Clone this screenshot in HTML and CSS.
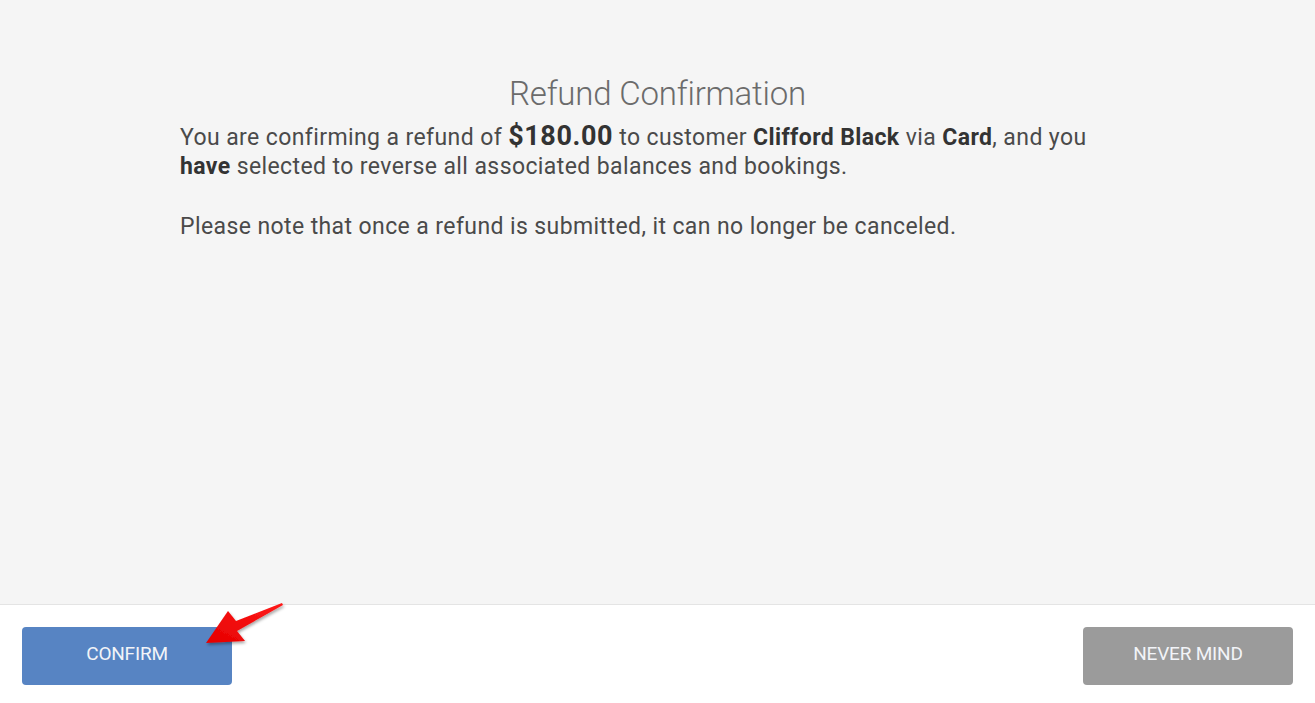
FILE: index.html
```html
<!DOCTYPE html>
<html lang="en">
<head>
<meta charset="utf-8">
<title>Refund Confirmation</title>
<link rel="stylesheet" href="styles.css">
</head>
<body>
<div class="page">
  <main class="content">
    <div class="inner">
      <h1 class="title">Refund Confirmation</h1>
      <p class="msg">You are confirming a refund of <strong class="amount">$180.00</strong> to customer <strong>Clifford Black</strong> via <strong>Card</strong>, and you <strong>have</strong> selected to reverse all associated balances and bookings.</p>
      <p class="msg note">Please note that once a refund is submitted, it can no longer be canceled.</p>
    </div>
  </main>
  <footer class="footer">
    <button class="btn btn-confirm" type="button">CONFIRM</button>
    <button class="btn btn-cancel" type="button">NEVER MIND</button>
    <svg class="arrow" width="100" height="60" viewBox="195 598 100 60" aria-hidden="true">
      <defs>
        <filter id="sh" x="-20%" y="-20%" width="140%" height="140%">
          <feDropShadow dx="1" dy="2" stdDeviation="1.5" flood-color="#000" flood-opacity="0.35"/>
        </filter>
        <linearGradient id="rg" x1="0" y1="1" x2="1" y2="0">
          <stop offset="0" stop-color="#e60000"/>
          <stop offset="1" stop-color="#ff1a1a"/>
        </linearGradient>
      </defs>
      <polygon filter="url(#sh)" fill="url(#rg)" points="282,603 236,621 228,611 206,643 245,641 237,631 283,605"/>
    </svg>
  </footer>
</div>
</body>
</html>
```

FILE: styles.css
```css
* { box-sizing: border-box; }
html, body { margin: 0; padding: 0; height: 100%; }
body {
  font-family: Roboto, "Liberation Sans", Arial, sans-serif;
  background: #f5f5f5;
}
.page {
  width: 1315px;
  height: 703px;
  display: flex;
  flex-direction: column;
}
.content {
  flex: 1;
  background: #f5f5f5;
}
.inner {
  width: 955px;
  margin: 0 auto;
  padding-top: 73px;
}
.title {
  margin: 0 0 7px 0;
  text-align: center;
  font-weight: 300;
  font-size: 33px;
  line-height: 42px;
  color: #6b6b6b;
  letter-spacing: -0.2px;
}
.msg {
  margin: 0;
  font-size: 23px;
  line-height: 29px;
  color: #4a4a4a;
  letter-spacing: 0.4px;
}
.msg strong { color: #333; font-weight: 700; }
.msg .amount { font-size: 27px; letter-spacing: 0.6px; }
.note { margin-top: 31px; }
.footer {
  position: relative;
  height: 99px;
  background: #fff;
  border-top: 1px solid #e4e4e4;
  display: flex;
  justify-content: space-between;
  align-items: flex-start;
  padding: 22px 22px 0 22px;
}
.btn {
  width: 210px;
  height: 58px;
  border: none;
  border-radius: 4px;
  padding: 0 0 5px 0;
  font-family: Roboto, "Liberation Sans", Arial, sans-serif;
  font-size: 19px;
  letter-spacing: -0.2px;
  color: #f2f4f8;
  cursor: pointer;
}
.btn-confirm { background: #5784c3; }
.btn-cancel { background: #9b9b9b; }
.arrow {
  position: absolute;
  left: 195px;
  top: -7px;
}
```
